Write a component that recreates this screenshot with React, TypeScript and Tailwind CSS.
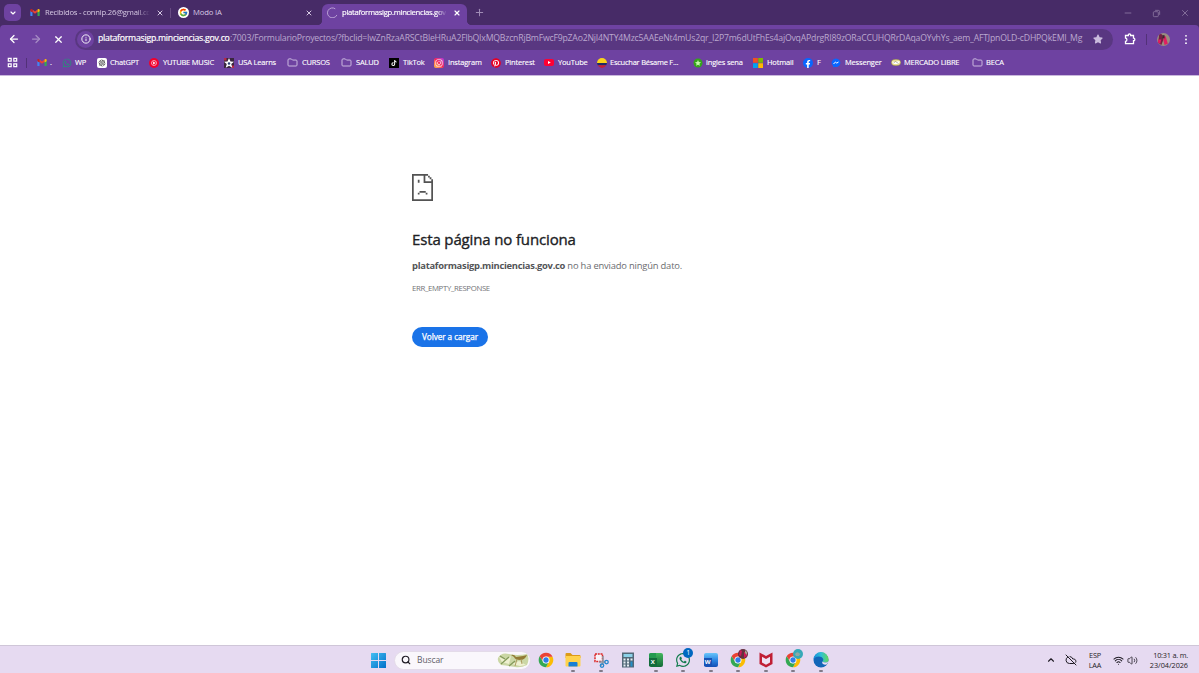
import type { ReactNode } from 'react'
import { ArrowLeft, ArrowRight, ChevronDown, ChevronUp, CloudOff, Info, Minus, Plus, Search, Volume2, Wifi, X } from 'lucide-react'
import { FaFacebookF, FaInstagram, FaPinterest, FaStar, FaTiktok, FaWhatsapp } from 'react-icons/fa'
import { FcGoogle } from 'react-icons/fc'
import { RiOpenaiFill } from 'react-icons/ri'

const Gmail = ({ className = '' }: { className?: string }) => (
  <svg viewBox="0 0 24 18" className={className}>
    <path d="M0 3v13.5C0 17.3.7 18 1.5 18H5.500V7L0 3z" fill="#4285f4" />
    <path d="M24 3v13.500c0 .8-.7 1.500-1.500 1.500H18.500V7L24 3z" fill="#34a853" />
    <path d="M5.500 7V1.500L12 6.500l6.500-5V7L12 12z" fill="#ea4335" />
    <path d="M0 3v2.500L5.500 9V1.500L4 .5C2.300-.8 0 .5 0 3z" fill="#c5221f" />
    <path d="M24 3v2.500L18.500 9V1.500L20 .5c1.700-1.300 4 0 4 2.500z" fill="#fbbc04" />
  </svg>
)

const Folder = () => (
  <svg viewBox="0 0 12 10" className="h-[9px] w-[11px]" fill="none" stroke="#d5c6e6" strokeWidth="1">
    <path d="M1 2.200C1 1.500 1.400 1 2 1h2.700L6 2.300h4c.6 0 1 .4 1 1v4.600c0 .6-.4 1-1 1H2c-.6 0-1-.4-1-1z" />
  </svg>
)

const Chrome = () => (
  <svg viewBox="0 0 48 48" className="size-[16px]">
    <path d="M24 14h19.500A22 22 0 0 1 24 46l8.700-17z" fill="#fbbc04" />
    <path d="M4.950 13A22 22 0 0 1 43.600 14H24a10 10 0 0 0-8.700 15z" fill="#ea4335" />
    <path d="M4.950 13l10.400 16A10 10 0 0 0 32.700 29L24 46A22 22 0 0 1 4.950 13z" fill="#34a853" />
    <circle cx="24" cy="24" r="10.500" fill="#fff" />
    <circle cx="24" cy="24" r="8" fill="#2f7de9" />
  </svg>
)

const SadPage = () => (
  <svg viewBox="0 0 17 21" className="h-[27px] w-[21px]" fill="#535353" preserveAspectRatio="none">
    <path d="M0 0h13v1.400H1.400v18.200h14.200V4H17v17H0z" />
    <path d="M9.400 0h1.400v5.600H17V7H9.400zM13 1.300h1.400v1.400H13zM14.300 2.600h1.400V4h-1.400z" />
    <path d="M4.700 4.400h1.400v2.400H4.700zM6.100 13.300h5v1.300h-5zM4.700 14.600h1.400v1.400H4.700zM11.100 14.600h1.400v1.400h-1.400z" />
  </svg>
)

const bookmarks: { label: string; box: string; icon: ReactNode; text?: string }[] = [
  { label: '.', box: 'w-[25px]', icon: <Gmail className="h-[7px] w-[10px]" /> },
  { label: 'WP', box: 'w-[35px]', icon: <FaWhatsapp className="size-[10px] text-[#25937a]" /> },
  { label: 'ChatGPT', box: 'w-[52px]', icon: <span className="flex size-[10px] items-center justify-center rounded-[2px] bg-white"><RiOpenaiFill className="size-[8px] text-[#222]" /></span> },
  {
    label: 'YUTUBE MUSIC', box: 'w-[75px] gap-[4px]', text: 'tracking-[-0.2px]',
    icon: <svg viewBox="0 0 20 20" className="size-[10px]"><circle cx="10" cy="10" r="10" fill="#f1002d" /><circle cx="10" cy="10" r="5" fill="none" stroke="#fff" strokeWidth="1.200" /><path d="M8.300 7l5 3-5 3z" fill="#fff" /></svg>,
  },
  {
    label: 'USA Learns', box: 'w-[63px] gap-[4px]',
    icon: <svg viewBox="0 0 20 20" className="size-[10px]"><path d="M0 0h20v20H0z" fill="#39263f" /><path d="M0 0h5v5H0zM15 15h5v5h-5z" fill="#b52849" /><path d="M10 0l3 7 7 .500-5.500 4.500 2 7.500L10 15.500 3.500 19.500l2-7.500L0 7.500 7 7z" fill="#fff" /><circle cx="10" cy="11" r="2.500" fill="#263b72" /></svg>,
  },
  { label: 'CURSOS', box: 'w-[54px] gap-[4px]', icon: <Folder /> },
  { label: 'SALUD', box: 'w-[48px] gap-[4px]', icon: <Folder /> },
  { label: 'TikTok', box: 'w-[45px] gap-[4px]', icon: <span className="flex size-[10px] items-center justify-center bg-black"><FaTiktok className="size-[6px] text-white" /></span> },
  { label: 'Instagram', box: 'w-[57px] gap-[4px]', icon: <span className="flex size-[10px] items-center justify-center rounded-[2px] bg-linear-to-tr from-[#fdc23a] via-[#f51f58] to-[#b42be4]"><FaInstagram className="size-[8px] text-white" /></span> },
  { label: 'Pinterest', box: 'w-[53px] gap-[4px]', icon: <FaPinterest className="size-[10px] bg-[radial-gradient(circle,white_50%,transparent_55%)] text-[#e60023]" /> },
  {
    label: 'YouTube', box: 'w-[53px] gap-[4px]',
    icon: <svg viewBox="0 0 20 14" className="h-[7px] w-[10px]"><rect width="20" height="14" rx="4" fill="#ff0033" /><path d="M8 4l5.500 3L8 10z" fill="#fff" /></svg>,
  },
  {
    label: 'Escuchar Bésame F...', box: 'w-[96px]', text: 'tracking-[-0.24px]',
    icon: <svg viewBox="0 0 20 20" className="size-[10px]"><path d="M0 10a10 10 0 0 1 20 0z" fill="#fbd31b" /><path d="M0 10h20l-1.500 4.500h-17z" fill="#202b65" /><path d="M1.500 14.500h17Q15 20 10 20T1.500 14.500z" fill="#c72034" /></svg>,
  },
  {
    label: 'ingles sena', box: 'w-[60px]',
    icon: <svg viewBox="0 0 20 20" className="size-[10px]"><circle cx="10" cy="10" r="9" fill="#35a51b" /><path d="M10 4l1.800 4 4.200.5-3.200 2.800 1 4.200L10 13.300 6.200 15.500l1-4.200L4 8.500l4.200-.500z" fill="#c6f5ac" /></svg>,
  },
  {
    label: 'Hotmail', box: 'w-[50px] gap-[4px]',
    icon: <svg viewBox="0 0 20 20" className="size-[10px]"><path d="M0 0h9.500v9.500H0z" fill="#f25022" /><path d="M10.500 0H20v9.500h-9.500z" fill="#7fba00" /><path d="M0 10.500h9.500V20H0z" fill="#00a4ef" /><path d="M10.500 10.500H20V20h-9.500z" fill="#ffb900" /></svg>,
  },
  { label: 'F', box: 'w-[28px] gap-[4px]', icon: <span className="flex size-[10px] items-end justify-center rounded-full bg-[#0866ff]"><FaFacebookF className="size-[8px] text-white" /></span> },
  {
    label: 'Messenger', box: 'w-[60px] gap-[4px]',
    icon: <svg viewBox="0 0 20 20" className="size-[10px]"><path d="M10 1a9 8.500 0 1 1-3 16.600L4 19v-3.300A8.500 8.500 0 0 1 10 1z" fill="#0a66ff" /><path d="M5 12l4-4 2.500 2.200L15 8" fill="none" stroke="#fff" strokeWidth="2" /></svg>,
  },
  {
    label: 'MERCADO LIBRE', box: 'w-[81px]', text: 'tracking-[-0.2px]',
    icon: <svg viewBox="0 0 20 14" className="h-[7px] w-[10px]"><ellipse cx="10" cy="7" rx="9.500" ry="6.500" fill="#e9dc92" stroke="#807842" /><path d="M2 5q4 1 8 0t8 0l-3 5H5z" fill="#fff" /><path d="M5 8l4-3 6 4" fill="none" stroke="#6e6a55" /></svg>,
  },
  { label: 'BECA', box: 'w-[50px]', icon: <Folder /> },
]

const Whatsapp = () => (
  <span className="relative">
    <FaWhatsapp className="size-[16px] text-[#117b4d]" />
    <span className="absolute -top-[4px] left-[8px] flex size-[10px] items-center justify-center rounded-full bg-[#0067c0] text-[7px] text-white">1</span>
  </span>
)

const ChromeProfile = ({ teal }: { teal?: boolean }) => (
  <span className="relative">
    <Chrome />
    <svg viewBox="0 0 10 10" className="absolute -top-[3px] left-[8px] size-[10px]">
      <circle cx="5" cy="5" r="5" fill={teal ? '#36a9b8' : '#64313e'} />
      {teal ? <path d="M2 5q2-3 4-1t2 0L6 7H3z" fill="#8ca9a5" /> : <path d="M2 1l2 1-1 5-2-1zM6 3l2 0 1 4-3 2z" fill="#cc1858" />}
      {!teal && <path d="M7 1l2 2v3L7 4z" fill="#a7a58d" />}
    </svg>
  </span>
)

const taskbarApps: { name: string; icon: ReactNode; open?: boolean }[] = [
  { name: 'chrome', icon: <Chrome /> },
  {
    name: 'explorer', open: true,
    icon: <svg viewBox="0 0 32 28" className="h-[14px] w-[16px]"><path d="M1 2q0-2 2-2h8l4 4h14q2 0 2 2v4H1z" fill="#dc9b18" /><path d="M1 6h30v19q0 2-2 2H3q-2 0-2-2z" fill="#ffd24c" /><path d="M7 27v-7q0-2 2-2h14q2 0 2 2v7z" fill="#187fd4" /></svg>,
  },
  {
    name: 'snip', open: true,
    icon: <svg viewBox="0 0 32 32" className="size-[16px]" fill="none"><rect x="4" y="4" width="15" height="15" stroke="#db2929" strokeWidth="3" strokeDasharray="4 1.500" fill="#f7f3fa" /><path d="M20 8v14l-4 5M12 20h13" stroke="#8b98a4" strokeWidth="3" /><circle cx="27" cy="20" r="3.500" stroke="#2387ce" strokeWidth="2.500" /><circle cx="18" cy="27" r="3.500" stroke="#2387ce" strokeWidth="2.500" /></svg>,
  },
  {
    name: 'calc',
    icon: <svg viewBox="0 0 24 32" className="h-[16px] w-[12px]"><path d="M0 1h24v30H0z" fill="#536878" /><path d="M3 4h18v6H3z" fill="#8bd1e8" /><path d="M3 13h4v4H3zm7 0h4v4h-4zm7 0h4v4h-4zM3 19h4v4H3zm7 0h4v4h-4zM3 25h4v4H3zm7 0h4v4h-4z" fill="#e6edf2" /><path d="M17 19h4v10h-4z" fill="#238fc7" /></svg>,
  },
  {
    name: 'excel', open: true,
    icon: <span className="relative flex size-[14px] overflow-hidden rounded-[2px] bg-linear-to-b from-[#42b85e] to-[#136a38]"><span className="absolute top-0 left-0 h-[5px] w-[7px] bg-[#249a50]" /><span className="absolute bottom-[1px] left-0 flex size-[8px] items-center justify-center bg-[#126b3b] text-[6px] font-bold text-white">X</span></span>,
  },
  { name: 'whatsapp', open: true, icon: <Whatsapp /> },
  {
    name: 'word', open: true,
    icon: <span className="relative flex h-[14px] w-[14px] overflow-hidden rounded-[2px] bg-linear-to-b from-[#69c5fa] via-[#2b87e3] to-[#164eb4]"><span className="absolute bottom-[1px] left-0 flex size-[8px] items-center justify-center bg-[#1753b6] text-[6px] font-bold text-white">W</span></span>,
  },
  { name: 'chrome-a', open: true, icon: <ChromeProfile /> },
  {
    name: 'mcafee', open: true,
    icon: <svg viewBox="0 0 28 32" className="h-[16px] w-[14px]"><path d="M1 1l13 7L27 1v23l-13 7-13-7z" fill="#c01f35" /><path d="M6 9.500l8 4.500 8-4.500v11.500l-8 4.500-8-4.500z" fill="#eee2f3" /></svg>,
  },
  { name: 'chrome-b', open: true, icon: <ChromeProfile teal /> },
  {
    name: 'edge', open: true,
    icon: (
      <svg viewBox="0 0 32 32" className="size-[16px]">
        <defs>
          <linearGradient id="edge-top" x1="0" x2="1"><stop stopColor="#168bd8" /><stop offset=".5" stopColor="#2fc1d6" /><stop offset="1" stopColor="#62d85b" /></linearGradient>
        </defs>
        <circle cx="16" cy="16" r="15" fill="#1266b8" />
        <path d="M1 15A15 15 0 0 1 31 15q0 6-6 6-5 0-6-2 3-3 1-6-2-4-8-4Q4 9 1 15z" fill="url(#edge-top)" />
        <path d="M19 19q1 2 6 2 4 0 6-3-1 5-4 7-4 1-7-1-3-2-1-5z" fill="#e9dff3" />
      </svg>
    ),
  },
]

function TabStrip() {
  return (
    <div className="flex h-[25px] items-end bg-[#472b67] text-[7.700px] text-[#d6c9e3]">
      <div className="mb-[4px] ml-[4px] flex size-[17px] items-center justify-center rounded-[5px] bg-[#6e42a1] text-white"><ChevronDown className="size-[8px]" strokeWidth={3.5} /></div>
      <div className="flex h-[25px] w-[150px] items-center pl-[9px]">
        <Gmail className="h-[7px] w-[10px]" />
        <span className="ml-[5px] w-[105px] tracking-[-0.230px] whitespace-nowrap [mask-image:linear-gradient(to_right,black_88%,transparent)]">Recibidos - connip.26@gmail.cc</span>
        <X className="ml-[6px] size-[8px]" strokeWidth={3} />
        <span className="ml-auto h-[10px] w-px bg-[#674b83]" />
      </div>
      <div className="flex h-[25px] w-[151px] items-center pl-[7px]">
        <span className="rounded-full bg-white p-[1px]"><FcGoogle className="size-[9px]" /></span>
        <span className="ml-[4px] tracking-[-0.150px]">Modo IA</span>
        <X className="mr-[9px] ml-auto size-[8px]" strokeWidth={3} />
      </div>
      <div className="relative flex h-[21px] w-[145px] items-center rounded-t-[6px] bg-[#6e42a1] pb-[4px] pl-[5px] text-white">
        <span className="absolute bottom-0 -left-[5px] size-[5px] bg-[radial-gradient(circle_at_0_0,transparent_5px,#6e42a1_5.500px)]" />
        <svg viewBox="0 0 20 20" className="size-[11px]" fill="none" stroke="#b9a0d3" strokeWidth="1.800"><path d="M15 3.300A9 9 0 1 0 18 14.500" /></svg>
        <span className="ml-[4px] w-[105px] tracking-[-0.300px] whitespace-nowrap [-webkit-text-stroke:0.150px] [mask-image:linear-gradient(to_right,black_90%,transparent)]">plataformasigp.minciencias.gov</span>
        <X className="mr-[6px] ml-auto size-[8px]" strokeWidth={3.5} />
        <span className="absolute -right-[5px] bottom-0 size-[5px] bg-[radial-gradient(circle_at_100%_0,transparent_5px,#6e42a1_5.500px)]" />
      </div>
      <Plus className="mb-[7px] ml-[7px] size-[11px] text-[#a08cb5]" strokeWidth={2.2} />
      <div className="mr-[9px] mb-[7px] ml-auto flex items-center gap-[19px] text-[#8e79a4]">
        <Minus className="size-[10px]" strokeWidth={2} />
        <svg viewBox="0 0 10 10" className="size-[9px]" fill="none" stroke="currentColor" strokeWidth=".9"><rect x="1.500" y="3" width="5.500" height="5.500" rx="1" /><path d="M3.500 1.500H7q1.500 0 1.500 1.500v3.500" /></svg>
        <X className="size-[10px]" strokeWidth={2} />
      </div>
    </div>
  )
}

function Toolbar() {
  return (
    <div className="flex h-[28px] items-center rounded-t-[4px] bg-[#6e42a1] text-white">
      <ArrowLeft className="ml-[8px] size-[12px]" strokeWidth={2.5} />
      <ArrowRight className="ml-[10px] size-[12px] text-[#a58bc4]" strokeWidth={2.5} />
      <X className="ml-[11px] size-[11px]" strokeWidth={2.6} />
      <div className="ml-[11px] flex h-[21px] w-[1038px] items-center rounded-full bg-[#593781] pl-[2px] text-[8.700px] whitespace-nowrap">
        <span className="flex size-[17px] items-center justify-center rounded-full bg-[#6e42a1]"><Info className="size-[10px]" strokeWidth={2.2} /></span>
        <span className="ml-[4px] w-[132px] tracking-[-0.230px] [-webkit-text-stroke:0.200px]">plataformasigp.minciencias.gov.co</span>
        <span className="tracking-[-0.200px] text-[#bba8cf]">:7003/FormularioProyectos/?fbclid=IwZnRzaARSCtBleHRuA2FlbQIxMQBzcnRjBmFwcF9pZAo2NjI4NTY4Mzc5AAEeNt4mUs2qr_I2P7m6dUtFhEs4ajOvqAPdrgRI89zORaCCUHQRrDAqaOYvhYs_aem_AFTJpnOLD-cDHPQkEMI_Mg</span>
        <FaStar className="mr-[10px] ml-auto size-[10px] shrink-0 text-[#cbbcdd]" />
      </div>
      <svg viewBox="0 0 12 12" className="ml-[11px] size-[12px]" fill="none" stroke="currentColor" strokeWidth="1.300"><path d="M1.500 2.500h2.800q-.2-1.500 1.200-1.500t1.200 1.500h2.800v2.600q1.300-.1 1.300 1.300T9.500 7.700v3H1.500V8.300q1.400 0 1.400-1.600T1.500 5z" /></svg>
      <span className="ml-[10px] h-[11px] w-px bg-[#523178]" />
      <svg viewBox="0 0 12 12" className="ml-[10px] size-[13px]"><circle cx="6" cy="6" r="6" fill="#9a8c80" /><path d="M2 1.500Q4 0 5 2l1 4-2 5-3-2z" fill="#752043" /><path d="M1 6l3 0-1 4-2-1zM6 3l2 0 2 7-3 1-1-4z" fill="#e01e62" /><path d="M5 2h2v3H5z" fill="#3c272f" /></svg>
      <svg viewBox="0 0 4 12" className="ml-[14px] h-[11px] w-[4px]" fill="currentColor"><circle cx="2" cy="2" r="1" /><circle cx="2" cy="6" r="1" /><circle cx="2" cy="10" r="1" /></svg>
    </div>
  )
}

function BookmarksBar() {
  return (
    <div className="flex h-[23px] items-center border-b border-[#c9b8dc] bg-[#6e42a1] pb-[3px] text-[7.500px] whitespace-nowrap text-white">
      <svg viewBox="0 0 10 10" className="ml-[7px] size-[11px] shrink-0" fill="none" stroke="currentColor" strokeWidth="1.100"><path d="M1.200 1.200h2.600v2.600H1.200zM6.200 1.200h2.600v2.600H6.200zM1.200 6.200h2.600v2.600H1.200zM6.200 6.200h2.600v2.600H6.200z" /></svg>
      <span className="mr-[10px] ml-[8px] h-[10px] w-px bg-[#523178]" />
      {bookmarks.map(b => (
        <div key={b.label} className={`flex shrink-0 items-center ${b.box.includes('gap') ? '' : 'gap-[3px]'} ${b.box}`}>
          {b.icon}
          <span className={`[-webkit-text-stroke:0.120px] ${b.text ?? 'tracking-[-0.180px]'}`}>{b.label}</span>
        </div>
      ))}
    </div>
  )
}

function Taskbar() {
  return (
    <footer className="flex h-[28px] items-center border-t border-[#cfc6d8] bg-[#e6daf1] pt-px text-[#1f1b24]">
      <svg viewBox="0 0 30 30" className="ml-[371px] size-[15px]">
        <defs>
          <linearGradient id="win" x2="1" y2="1"><stop stopColor="#43bff2" /><stop offset="1" stopColor="#006fc9" /></linearGradient>
        </defs>
        <path d="M0 1q0-1 1-1h13v14H0zM16 0h13q1 0 1 1v13H16zM0 16h14v14H1q-1 0-1-1zM16 16h14v13q0 1-1 1H16z" fill="url(#win)" />
      </svg>
      <div className="ml-[8px] flex h-[19px] w-[137px] items-center rounded-full border border-[#e4dbe9] bg-[#faf7fc] pl-[6px]">
        <Search className="size-[10px]" strokeWidth={2.8} />
        <span className="ml-[6px] text-[8.500px] tracking-[-0.100px] text-[#625d68]">Buscar</span>
        <svg viewBox="0 0 32 16" className="mr-px ml-auto h-[16px] w-[32px]">
          <path d="M1 6Q4 0 12 2t18 0q3 4 0 11-6 3-12 2T4 13Q0 10 1 6z" fill="#cbd7a5" />
          <path d="M2 5l7 3 5-4-2 8-7-2zM15 12l7-3 7 4-6 1z" fill="#eef0d0" />
          <path d="M3 4l5 3M4 12l8-7M12 14l6-5" stroke="#83995b" strokeWidth="1.200" />
          <path d="M14 3q3-1 5 2l7-1 4-1q-2 5-7 5t-6-3z" fill="#927b35" />
          <path d="M20 7l-2 7M24 7l1 5" stroke="#ae9b60" />
        </svg>
      </div>
      <div className="ml-px flex h-full">
        {taskbarApps.map(app => (
          <div key={app.name} className="relative flex w-[27.500px] items-center justify-center">
            {app.icon}
            {app.open && <span className="absolute bottom-[1px] h-[2px] w-[4px] rounded-full bg-[#817a88]" />}
          </div>
        ))}
      </div>
      <div className="mr-[11px] ml-auto flex items-center text-[7.300px] leading-[10px]">
        <ChevronUp className="size-[10px]" strokeWidth={2.6} />
        <CloudOff className="ml-[9px] size-[12px]" strokeWidth={2} />
        <span className="ml-[11px] w-[14px] text-center tracking-[-0.100px]">ESP LAA</span>
        <Wifi className="ml-[11px] size-[11px]" strokeWidth={2.2} />
        <Volume2 className="ml-[3px] size-[11px]" strokeWidth={1.700} />
        <span className="ml-[10px] w-[40px] text-right tracking-[-0.200px] whitespace-nowrap">10:31 a. m.<br /><span className="tracking-[-0.050px]">23/04/2026</span></span>
      </div>
    </footer>
  )
}

export default function App() {
  return (
    <div className="flex h-[673px] w-[1199px] flex-col overflow-hidden bg-white font-['Open_Sans','Noto_Sans',sans-serif]">
      <header className="bg-[#472b67]">
        <TabStrip />
        <Toolbar />
        <BookmarksBar />
      </header>
      <main className="flex flex-1 flex-col items-start pt-[98px] pl-[412px] whitespace-nowrap">
        <SadPage />
        <h1 className="mt-[28px] text-[15px] leading-[20px] tracking-[-0.140px] text-[#202124] [-webkit-text-stroke:0.350px]">Esta página no funciona</h1>
        <p className="mt-[10px] text-[9.400px] leading-[14px] tracking-[-0.190px] text-[#6b6c6f]"><b className="tracking-[-0.275px] text-[#535457]">plataformasigp.minciencias.gov.co</b> no ha enviado ningún dato.</p>
        <p className="mt-[9px] text-[7.800px] leading-[12px] tracking-[-0.350px] text-[#717276]">ERR_EMPTY_RESPONSE</p>
        <button className="mt-[33px] h-[20px] w-[76px] rounded-full bg-[#1a73e8] text-[8.200px] tracking-[-0.060px] text-white [-webkit-text-stroke:0.250px]">Volver a cargar</button>
      </main>
      <Taskbar />
    </div>
  )
}
